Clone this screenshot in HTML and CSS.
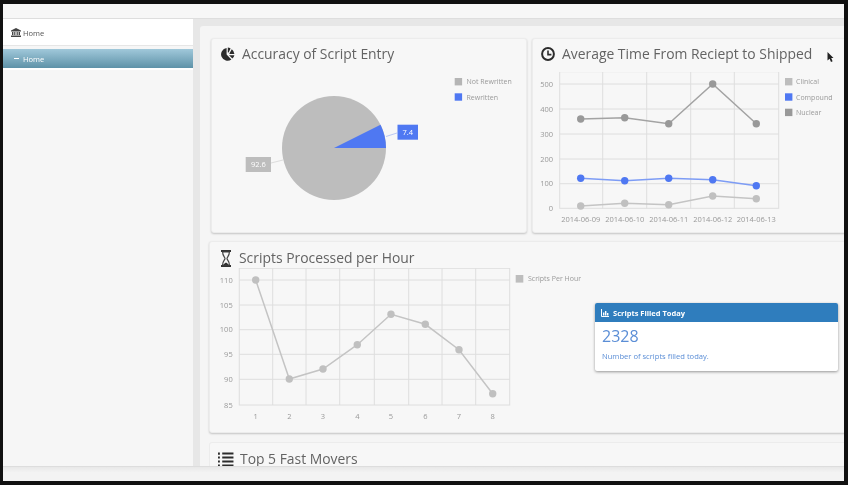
FILE: index.html
```html
<!DOCTYPE html>
<html lang="en">

<head>
  <meta charset="UTF-8" />
  <title>Dashboard</title>
  <link rel="stylesheet" href="styles.css">
</head>

<body>
  <div class="frame">
    <div class="topbar"></div>

    <div class="body">
      <!-- Sidebar -->
      <div class="sidebar">
        <div class="side-home">
          <svg class="bank-icon" viewBox="0 0 10 9">
            <path d="M5 0 L10 2.6 V3.4 H0 V2.6 Z M1 4 H2.4 V7 H1 Z M3.2 4 H4.4 V7 H3.2 Z M5.6 4 H6.8 V7 H5.6 Z M7.6 4 H9 V7 H7.6 Z M0 7.4 H10 V9 H0 Z" fill="#444" />
          </svg>
          <span>Home</span>
        </div>
        <div class="side-active"><span class="dash"></span><span>Home</span></div>
      </div>

      <!-- Main area -->
      <div class="content">
        <div class="panel">
          <div class="row-top">
            <div class="card card-pie">
              <h2 class="card-title">
                <svg class="icon" viewBox="0 0 14 14">
                  <path d="M5.6 1 V7.6 L10.4 12.4 A6.4 6.4 0 1 1 5.6 1 Z" fill="#2c2c2c" />
                  <path d="M6.8 0.6 A6.4 6.4 0 0 1 9.6 1.4 L7.6 5.4 L6.8 5.4 Z M8.4 6.4 L10.8 2.2 A6.4 6.4 0 0 1 13.4 7 H8.6 Z M8 8.2 H13.4 A6.4 6.4 0 0 1 11.4 11.6 Z" fill="#2c2c2c" />
                </svg>
                <span>Accuracy of Script Entry</span>
              </h2>
              <svg class="chart" width="316" height="160" viewBox="211 72 316 160">
                <circle cx="334" cy="148" r="52" fill="#bdbdbd" />
                <path d="M334 148 L380.5 124.7 A52 52 0 0 1 386 148 Z" fill="#4f78f2" />
                <line x1="386" y1="136.5" x2="397" y2="133" stroke="#b9c8f5" />
                <rect x="397.5" y="124.7" width="20.5" height="15" fill="#4f78f2" />
                <text class="pie-label" x="407.7" y="134.8">7.4</text>
                <line x1="271" y1="163" x2="283" y2="160" stroke="#dcdcdc" />
                <rect x="245.7" y="157" width="25.3" height="15" fill="#bdbdbd" />
                <text class="pie-label" x="258.3" y="167">92.6</text>
                <rect x="454.7" y="78" width="7.4" height="7.4" fill="#b5b5b5" />
                <text class="legend" x="466.5" y="84.3">Not Rewritten</text>
                <rect x="454.7" y="93.3" width="7.4" height="7.4" fill="#4f78f2" />
                <text class="legend" x="466.5" y="99.6">Rewritten</text>
              </svg>
            </div>

            <div class="card card-line">
              <h2 class="card-title">
                <svg class="icon" viewBox="0 0 14 14">
                  <circle cx="7" cy="7" r="5.9" fill="none" stroke="#2c2c2c" stroke-width="2" />
                  <path d="M7 3.4 V7.6 H10.4" fill="none" stroke="#2c2c2c" stroke-width="1.6" />
                </svg>
                <span>Average Time From Reciept to Shipped</span>
              </h2>
              <svg class="chart" width="314" height="160" viewBox="532 72 314 160">
                <g class="grid">
                  <rect x="559.7" y="71.7" width="219" height="136.6" />
                  <path d="M602.7 71.7 V208.3 M646.7 71.7 V208.3 M690.7 71.7 V208.3 M734.3 71.7 V208.3" />
                  <path d="M559.7 84 H778.7 M559.7 109 H778.7 M559.7 134 H778.7 M559.7 159 H778.7 M559.7 183.7 H778.7" />
                </g>
                <g class="axis-y">
                  <text x="553" y="86.5">500</text>
                  <text x="553" y="111.5">400</text>
                  <text x="553" y="136.5">300</text>
                  <text x="553" y="161.5">200</text>
                  <text x="553" y="186.2">100</text>
                  <text x="553" y="210.8">0</text>
                </g>
                <g class="axis-x">
                  <text x="580.7" y="222">2014-06-09</text>
                  <text x="624.7" y="222">2014-06-10</text>
                  <text x="668.7" y="222">2014-06-11</text>
                  <text x="712.7" y="222">2014-06-12</text>
                  <text x="756.3" y="222">2014-06-13</text>
                </g>
                <polyline class="line-clinical" points="580.7,206 624.7,203.3 668.7,204.7 712.7,196 756.3,198.7" />
                <g class="dots-clinical">
                  <circle cx="580.7" cy="206" r="3.7" />
                  <circle cx="624.7" cy="203.3" r="3.7" />
                  <circle cx="668.7" cy="204.7" r="3.7" />
                  <circle cx="712.7" cy="196" r="3.7" />
                  <circle cx="756.3" cy="198.7" r="3.7" />
                </g>
                <polyline class="line-compound" points="580.7,178.3 624.7,180.7 668.7,178.3 712.7,179.7 756.3,185.7" />
                <g class="dots-compound">
                  <circle cx="580.7" cy="178.3" r="3.7" />
                  <circle cx="624.7" cy="180.7" r="3.7" />
                  <circle cx="668.7" cy="178.3" r="3.7" />
                  <circle cx="712.7" cy="179.7" r="3.7" />
                  <circle cx="756.3" cy="185.7" r="3.7" />
                </g>
                <polyline class="line-nuclear" points="580.7,119 624.7,117.7 668.7,123.7 712.7,84 756.3,123.7" />
                <g class="dots-nuclear">
                  <circle cx="580.7" cy="119" r="3.7" />
                  <circle cx="624.7" cy="117.7" r="3.7" />
                  <circle cx="668.7" cy="123.7" r="3.7" />
                  <circle cx="712.7" cy="84" r="3.7" />
                  <circle cx="756.3" cy="123.7" r="3.7" />
                </g>
                <rect x="785" y="78" width="7.4" height="7.4" fill="#bdbdbd" />
                <text class="legend" x="796" y="84.3">Clinical</text>
                <rect x="785" y="93.3" width="7.4" height="7.4" fill="#4f78f2" />
                <text class="legend" x="796" y="99.6">Compound</text>
                <rect x="785" y="108.7" width="7.4" height="7.4" fill="#999" />
                <text class="legend" x="796" y="115">Nuclear</text>
              </svg>
              <svg class="cursor" viewBox="0 0 7 10">
                <path d="M0.5 0 L6.5 6 H4.2 L5.6 9.2 L4 10 L2.6 6.8 L0.5 8.6 Z" fill="#222" />
              </svg>
            </div>
          </div>

          <div class="card card-hour">
            <h2 class="card-title">
              <svg class="icon icon-tall" viewBox="0 0 12 17">
                <path d="M1 1 H11 M1 16 H11" stroke="#333" stroke-width="1.8" />
                <path d="M2.6 2 C2.6 6 5 7 5 8.5 C5 10 2.6 11 2.6 15 H9.4 C9.4 11 7 10 7 8.5 C7 7 9.4 6 9.4 2 Z" fill="none" stroke="#444" stroke-width="1.2" />
                <path d="M3.6 15 C3.8 13.6 5 12.8 6 12.4 C7 12.8 8.2 13.6 8.4 15 Z" fill="#333" />
              </svg>
              <span>Scripts Processed per Hour</span>
            </h2>
            <div class="hour-row">
              <svg class="chart" width="382" height="160" viewBox="209 268 382 160">
                <g class="grid">
                  <rect x="239.3" y="268.3" width="270.4" height="136.7" />
                  <path d="M272.7 268.3 V405 M306 268.3 V405 M339.7 268.3 V405 M374.3 268.3 V405 M408.7 268.3 V405 M442 268.3 V405 M475.7 268.3 V405" />
                  <path d="M239.3 280 H509.7 M239.3 305 H509.7 M239.3 329.7 H509.7 M239.3 354.3 H509.7 M239.3 379.3 H509.7" />
                </g>
                <g class="axis-y">
                  <text x="232.7" y="282.5">110</text>
                  <text x="232.7" y="307.5">105</text>
                  <text x="232.7" y="332.2">100</text>
                  <text x="232.7" y="356.8">95</text>
                  <text x="232.7" y="381.8">90</text>
                  <text x="232.7" y="407.5">85</text>
                </g>
                <g class="axis-x">
                  <text x="255.7" y="419.3">1</text>
                  <text x="289.3" y="419.3">2</text>
                  <text x="323" y="419.3">3</text>
                  <text x="357.3" y="419.3">4</text>
                  <text x="391" y="419.3">5</text>
                  <text x="425.3" y="419.3">6</text>
                  <text x="459" y="419.3">7</text>
                  <text x="492.7" y="419.3">8</text>
                </g>
                <polyline class="line-clinical" points="255.7,280 289.3,379 323,369 357.3,344.7 391,314.3 425.3,324.3 459,349.7 492.7,393.7" />
                <g class="dots-clinical">
                  <circle cx="255.7" cy="280" r="3.7" />
                  <circle cx="289.3" cy="379" r="3.7" />
                  <circle cx="323" cy="369" r="3.7" />
                  <circle cx="357.3" cy="344.7" r="3.7" />
                  <circle cx="391" cy="314.3" r="3.7" />
                  <circle cx="425.3" cy="324.3" r="3.7" />
                  <circle cx="459" cy="349.7" r="3.7" />
                  <circle cx="492.7" cy="393.7" r="3.7" />
                </g>
                <rect x="515.7" y="275" width="7.6" height="7.6" fill="#bdbdbd" />
                <text class="legend" x="528" y="281.4">Scripts Per Hour</text>
              </svg>

              <div class="filled">
                <div class="filled-head">
                  <svg class="filled-icon" viewBox="0 0 8 8">
                    <path d="M0.5 0 V7.5 H8" fill="none" stroke="#fff" stroke-width="1" />
                    <path d="M2 3.5 H3.4 V6.5 H2 Z M4 2 H5.4 V6.5 H4 Z M6 4 H7.4 V6.5 H6 Z" fill="#fff" />
                  </svg>
                  <span>Scripts Filled Today</span>
                </div>
                <div class="filled-body">
                  <div class="filled-num">2328</div>
                  <div class="filled-desc">Number of scripts filled today.</div>
                </div>
              </div>
            </div>
          </div>

          <div class="card card-movers">
            <h2 class="card-title">
              <svg class="icon icon-list" viewBox="0 0 17 16">
                <path d="M5 1.5 H17 M5 5.8 H17 M5 10.2 H17 M5 14.5 H17" stroke="#2c2c2c" stroke-width="2.2" />
                <path d="M1.5 0.5 V3 M1.5 4.8 V7 M1.5 9 V11.2 M1.5 13.2 V15.6" stroke="#2c2c2c" stroke-width="2" />
              </svg>
              <span>Top 5 Fast Movers</span>
            </h2>
          </div>
        </div>
      </div>
    </div>

    <div class="footer"></div>
  </div>
</body>

</html>
```

FILE: styles.css
```css
* {
  box-sizing: border-box;
}

html,
body {
  margin: 0;
  padding: 0;
  height: 100%;
  overflow: hidden;
  background-color: #111;
}

.frame {
  height: 485px;
  padding: 4px 4px 4px 3px;
  display: flex;
  flex-direction: column;
  font-family: "Open Sans", sans-serif;
  filter: blur(0.55px);
}

.topbar {
  height: 15px;
  background-color: #f7f7f7;
  border-bottom: 1px solid #dedede;
}

.body {
  flex: 1;
  min-height: 0;
  display: flex;
  overflow: hidden;
}

/* Sidebar */
.sidebar {
  width: 190px;
  background-color: #f6f6f6;
}

.side-home {
  height: 27px;
  padding-left: 8px;
  padding-top: 1px;
  display: flex;
  align-items: center;
  gap: 2px;
  font-size: 7.5px;
  color: #555;
  background-color: #fff;
  border-bottom: 1px solid #e6e6e6;
}

.bank-icon {
  width: 10px;
  height: 9px;
}

.side-active {
  height: 19px;
  margin-top: 3px;
  padding-left: 11px;
  display: flex;
  align-items: center;
  gap: 4px;
  font-size: 7.5px;
  color: #fff;
  background: linear-gradient(#a0c8da, #5e92a8);
  box-shadow: 0 2px 0 #fff;
}

.dash {
  width: 5px;
  height: 1.5px;
  background-color: #fff;
}

/* Main area */
.content {
  flex: 1;
  min-width: 0;
  padding: 7px 0 0 7px;
  background-color: #e7e7e7;
}

.panel {
  height: 100%;
  padding: 12px 0 0 9px;
  background-color: #f5f5f5;
  border-radius: 3px 0 0 0;
  overflow: hidden;
}

.row-top {
  display: flex;
  gap: 5px;
  padding-left: 2px;
}

.card {
  position: relative;
  background-color: #f7f7f7;
  border: 1px solid #ececec;
  border-radius: 3px;
  box-shadow: 0 1px 2px rgba(0, 0, 0, 0.2);
}

.card-pie {
  width: 316px;
  height: 195px;
  flex-shrink: 0;
}

.card-line {
  width: 330px;
  height: 195px;
  flex-shrink: 0;
  margin-right: -20px;
}

.card-hour {
  height: 192px;
  margin-top: 8px;
  margin-right: -4px;
}

.card-movers {
  height: 24px;
  margin-top: 9px;
  margin-right: -4px;
  border-bottom: 0;
  border-radius: 3px 3px 0 0;
  box-shadow: none;
}

.card-title {
  height: 33px;
  margin: 0;
  padding-left: 9px;
  padding-bottom: 3px;
  display: flex;
  align-items: center;
  gap: 7px;
  font-size: 13.9px;
  line-height: 1;
  font-weight: 400;
  color: #636363;
  white-space: nowrap;
}

.card-line .card-title {
  padding-left: 8px;
}

.card-hour .card-title {
  height: 26px;
  padding-left: 10px;
  padding-top: 6px;
  padding-bottom: 0;
}

.card-movers .card-title {
  height: 23px;
  padding-left: 7px;
  padding-top: 9px;
  padding-bottom: 0;
  gap: 6px;
}

.icon {
  width: 14px;
  height: 14px;
  flex-shrink: 0;
}

.icon-tall {
  width: 12px;
  height: 17px;
}

.icon-list {
  width: 17px;
  height: 15px;
}

.chart {
  display: block;
  flex-shrink: 0;
  margin-left: -1px;
}

.cursor {
  position: absolute;
  left: 294px;
  top: 13px;
  width: 7px;
  height: 10px;
}

/* Chart parts */
.grid rect,
.grid path {
  fill: none;
  stroke: #dedede;
  stroke-width: 1;
}

.legend {
  font-size: 7px;
  fill: #9a9a9a;
}

.pie-label {
  font-size: 7.5px;
  fill: #fff;
  text-anchor: middle;
}

.axis-y text {
  font-size: 7.5px;
  fill: #999;
  text-anchor: end;
}

.axis-x text {
  font-size: 7.5px;
  fill: #999;
  text-anchor: middle;
}

.line-clinical,
.line-compound,
.line-nuclear {
  fill: none;
  stroke-width: 1.5;
}

.line-clinical {
  stroke: #c4c4c4;
}

.line-compound {
  stroke: #7d9cf5;
}

.line-nuclear {
  stroke: #a3a3a3;
}

.dots-clinical {
  fill: #c0c0c0;
}

.dots-compound {
  fill: #4f78f2;
}

.dots-nuclear {
  fill: #999;
}

/* Scripts filled box */
.hour-row {
  display: flex;
  align-items: flex-start;
  padding-right: 9px;
}

.filled {
  flex: 1;
  margin: 35px 0 0 4px;
  height: 68px;
  background-color: #fff;
  border-radius: 2px;
  box-shadow: 0 1px 3px rgba(0, 0, 0, 0.4);
  overflow: hidden;
}

.filled-head {
  height: 19px;
  padding-left: 6px;
  display: flex;
  align-items: center;
  gap: 4px;
  font-size: 7.5px;
  font-weight: 700;
  color: #fff;
  background-color: #2f7dbd;
}

.filled-icon {
  width: 8px;
  height: 8px;
}

.filled-body {
  padding: 3px 7px;
  color: #5b8ed6;
}

.filled-num {
  font-size: 16px;
  line-height: 22px;
}

.filled-desc {
  margin-top: 4px;
  font-size: 7.6px;
  line-height: 10px;
}

.footer {
  height: 15px;
  flex-shrink: 0;
  background: linear-gradient(#e8e8e8, #f3f3f3 40%);
  border-top: 1px solid #ddd;
}
```
